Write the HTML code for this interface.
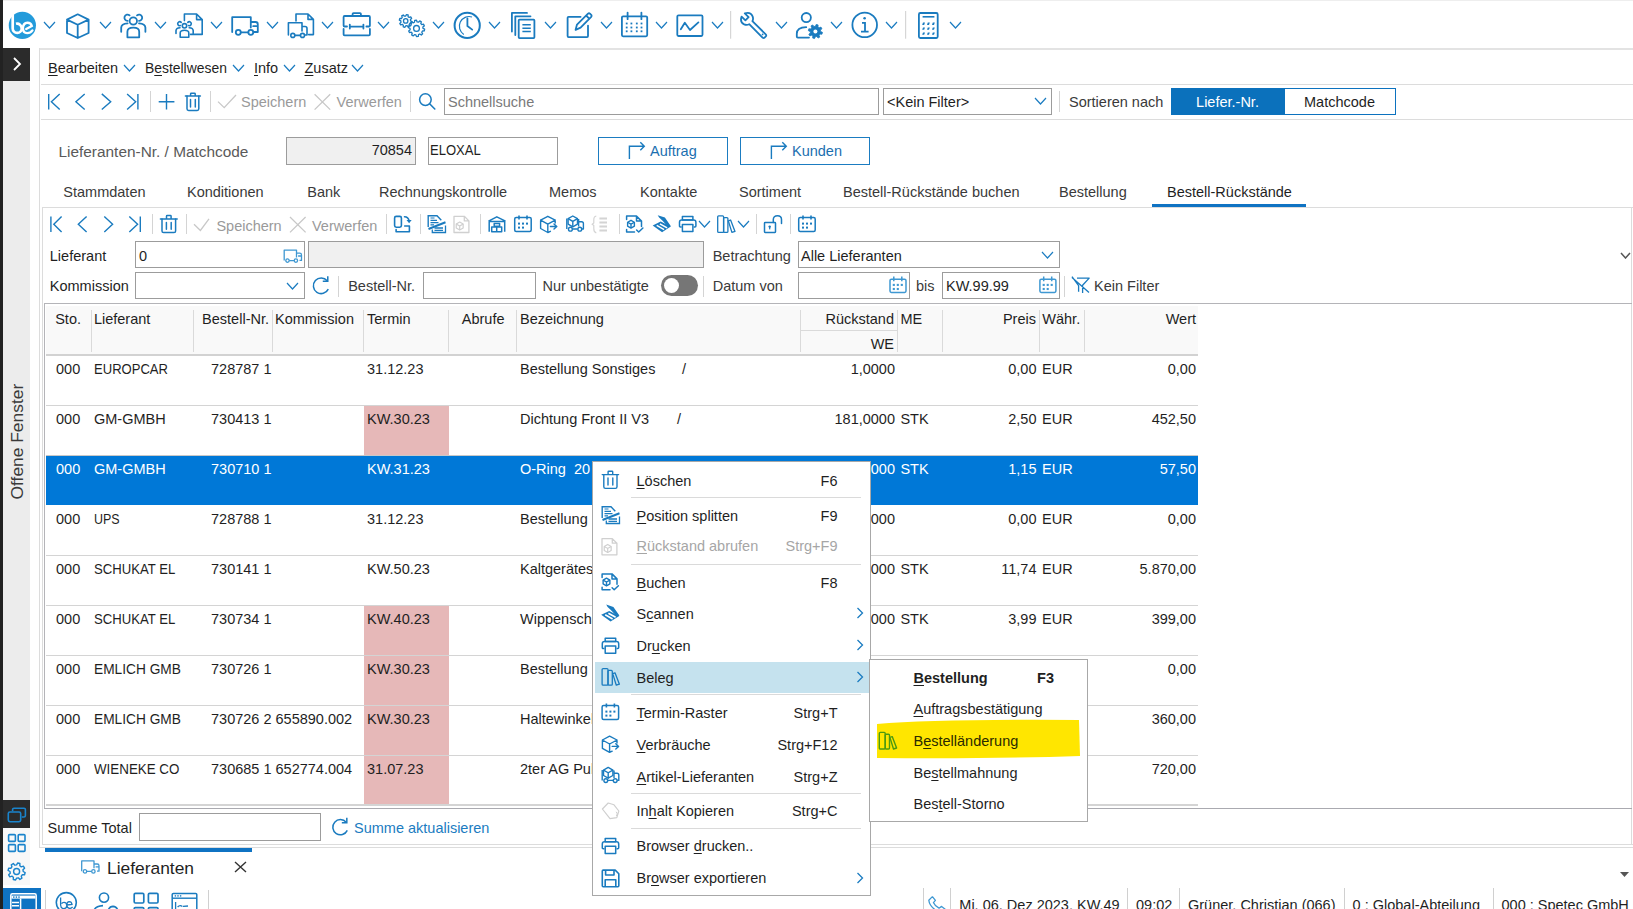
<!DOCTYPE html>
<html><head><meta charset="utf-8"><style>
html,body{margin:0;padding:0;}
body{width:1633px;height:909px;position:relative;overflow:hidden;background:#fff;font-family:"Liberation Sans",sans-serif;}
.a{position:absolute;}
.t{position:absolute;white-space:nowrap;line-height:20px;height:20px;}
u{text-decoration:underline;text-underline-offset:2px;text-decoration-thickness:1px;}
</style></head><body>
<div class="a" style="left:0px;top:0px;width:3px;height:909px;background:#222222;"></div>
<div class="a" style="left:3px;top:0px;width:1630px;height:1px;background:#eeeeee;"></div>
<div class="a" style="left:3px;top:48px;width:27px;height:33px;background:#2b2b2b;"></div>
<svg class="a" style="left:12px;top:57px;" width="10" height="14" viewBox="0 0 10 14"><polyline points="2,1 8,7 2,13" fill="none" stroke="#fff" stroke-width="1.8"/></svg>
<div class="a" style="left:3px;top:81px;width:27px;height:719px;background:#ececec;"></div>
<div class="t" style="left:-41px;top:431.5px;width:115px;font-size:17.4px;color:#3a3a3a;transform:rotate(-90deg);transform-origin:center;text-align:center;line-height:20px;">Offene Fenster</div>
<div class="a" style="left:3px;top:800px;width:27px;height:28px;background:#2b2b2b;"></div>
<div class="a" style="left:3px;top:828px;width:27px;height:57px;background:#f8f8f8;"></div>
<div class="a" style="left:3px;top:888px;width:38px;height:21px;background:#0f73c3;"></div>
<svg class="a" style="left:0;top:0" width="1633" height="909" viewBox="0 0 1633 909"><circle cx="22.35" cy="25.45" r="13.6" fill="#239bdb"/><path d="M12.7 14.2 L12.7 28.4 A4.5 4.5 0 0 0 21.7 28.4 A4.6 4.6 0 0 0 16 23.8" fill="none" stroke="#fff" stroke-width="2.7"/><path d="M26.2 29 L31.8 26 Q30.8 22.6 27.4 22.7 Q23.2 23 22.9 28 Q23 33 27.2 33.1 Q30.4 33.1 32.4 30.4" fill="none" stroke="#fff" stroke-width="2.4" stroke-linecap="round"/><path d="M77.7 14.3 L67 19.6 L67 33 L77.7 38 L88.6 33 L88.6 19.6 Z M67 19.6 L77.7 24.8 L88.6 19.6 M77.7 24.8 L77.7 38" fill="none" stroke="#1a7bbf" stroke-width="1.8" stroke-linecap="round" stroke-linejoin="round"/><circle cx="133.3" cy="21" r="3.7" fill="none" stroke="#1a7bbf" stroke-width="1.8" stroke-linecap="round" stroke-linejoin="round"/><path d="M127.4 37.3 L127.4 31.7 Q127.4 27.7 133.3 27.7 Q139.2 27.7 139.2 31.7 L139.2 37.3 Z" fill="none" stroke="#1a7bbf" stroke-width="1.8" stroke-linecap="round" stroke-linejoin="round"/><path d="M129.6 15.4 A3.1 3.1 0 1 0 127.6 20.8 M137 15.4 A3.1 3.1 0 1 1 139 20.8" fill="none" stroke="#1a7bbf" stroke-width="1.8" stroke-linecap="round" stroke-linejoin="round"/><path d="M121.2 31.8 L121.2 27.6 Q121.4 23.6 127.6 23.3 M145.4 31.8 L145.4 27.6 Q145.2 23.6 139 23.3" fill="none" stroke="#1a7bbf" stroke-width="1.8" stroke-linecap="round" stroke-linejoin="round"/><path d="M184.4 20.6 L184.4 14 L196.6 14 L202.2 19.6 L202.2 34.4 L190.5 34.4 M196.6 14 L196.6 19.6 L202.2 19.6" fill="none" stroke="#1a7bbf" stroke-width="1.6" stroke-linecap="round" stroke-linejoin="round"/><circle cx="184.5" cy="25.8" r="2.2" fill="none" stroke="#1a7bbf" stroke-width="1.6" stroke-linecap="round" stroke-linejoin="round"/><path d="M180.2 37.2 L180.2 33 Q180.2 30.3 184.5 30.3 Q188.8 30.3 188.8 33 L188.8 37.2 Z" fill="none" stroke="#1a7bbf" stroke-width="1.6" stroke-linecap="round" stroke-linejoin="round"/><path d="M181.2 22.4 A2 2 0 1 0 180.4 25.6 M187.8 22.4 A2 2 0 1 1 188.6 25.6 M176 33.4 L176 30.6 Q176.2 27.9 180 27.7 M193.2 33.4 L193.2 30.6 Q193 27.9 189.2 27.7" fill="none" stroke="#1a7bbf" stroke-width="1.6" stroke-linecap="round" stroke-linejoin="round"/><path d="M232.2 32 L232.2 17.2 L250.8 17.2 L250.8 27.5 M251 22 L255.6 22 Q257.8 22 257.8 24.4 L257.8 32 L253.4 32 M253.2 26.2 L257.4 26.2 M240.8 32.3 L248.3 32.3" fill="none" stroke="#1a7bbf" stroke-width="1.8" stroke-linecap="round" stroke-linejoin="round"/><circle cx="238.3" cy="32.3" r="2.5" fill="none" stroke="#1a7bbf" stroke-width="1.8" stroke-linecap="round" stroke-linejoin="round"/><circle cx="250.8" cy="32.3" r="2.5" fill="none" stroke="#1a7bbf" stroke-width="1.8" stroke-linecap="round" stroke-linejoin="round"/><path d="M296 21 L296 14 L308 14 L313.4 19.4 L313.4 34.6 L308.6 34.6 M308 14 L308 19.4 L313.4 19.4" fill="none" stroke="#1a7bbf" stroke-width="1.6" stroke-linecap="round" stroke-linejoin="round"/><path d="M288.4 35 L288.4 22.8 L302 22.8 L302 31 M302.2 26.5 L305 26.5 Q307 26.5 307 28.5 L307 35 L305 35 M294.8 35.4 L300.4 35.4" fill="none" stroke="#1a7bbf" stroke-width="1.6" stroke-linecap="round" stroke-linejoin="round"/><circle cx="292.8" cy="35.4" r="2" fill="none" stroke="#1a7bbf" stroke-width="1.6" stroke-linecap="round" stroke-linejoin="round"/><circle cx="302.5" cy="35.4" r="2" fill="none" stroke="#1a7bbf" stroke-width="1.6" stroke-linecap="round" stroke-linejoin="round"/><path d="M352.6 16 L352.6 13.9 Q352.6 13.1 353.5 13.1 L360 13.1 Q360.9 13.1 360.9 13.9 L360.9 16" fill="none" stroke="#1a7bbf" stroke-width="1.8" stroke-linecap="round" stroke-linejoin="round"/><path d="M347 26.5 L344.6 26.5 Q343.6 26.5 343.6 25.5 L343.6 17 Q343.6 16 344.6 16 L368.9 16 Q369.9 16 369.9 17 L369.9 25.5 Q369.9 26.5 368.9 26.5 L366.4 26.5 M343.6 29 L343.6 34.4 Q343.6 35.3 344.6 35.3 L368.9 35.3 Q369.9 35.3 369.9 34.4 L369.9 29 M349.8 26.6 L363.4 26.6 M349.8 24.6 L349.8 28.6 M363.4 24.6 L363.4 28.6" fill="none" stroke="#1a7bbf" stroke-width="1.8" stroke-linecap="round" stroke-linejoin="round"/><polygon points="410.60,20.90 412.06,21.65 411.61,23.35 409.98,23.29 409.16,24.36 409.66,25.93 408.15,26.81 407.03,25.62 405.70,25.80 404.95,27.26 403.25,26.81 403.31,25.18 402.24,24.36 400.67,24.86 399.79,23.35 400.98,22.23 400.80,20.90 399.34,20.15 399.79,18.45 401.42,18.51 402.24,17.44 401.74,15.87 403.25,14.99 404.37,16.18 405.70,16.00 406.45,14.54 408.15,14.99 408.09,16.62 409.16,17.44 410.73,16.94 411.61,18.45 410.42,19.57" fill="none" stroke="#1a7bbf" stroke-width="1.3" stroke-linejoin="round"/><circle cx="405.7" cy="20.9" r="2.2" fill="none" stroke="#1a7bbf" stroke-width="1.3"/><polygon points="423.00,28.40 424.66,29.17 424.30,30.93 422.47,30.98 421.76,32.22 422.65,33.82 421.32,35.03 419.81,33.99 418.51,34.58 418.29,36.40 416.50,36.60 415.89,34.87 414.49,34.58 413.24,35.93 411.68,35.03 412.20,33.28 411.24,32.22 409.44,32.57 408.70,30.93 410.16,29.82 410.00,28.40 408.34,27.63 408.70,25.87 410.53,25.82 411.24,24.58 410.35,22.98 411.68,21.77 413.19,22.81 414.49,22.22 414.71,20.40 416.50,20.20 417.11,21.93 418.51,22.22 419.76,20.87 421.32,21.77 420.80,23.52 421.76,24.58 423.56,24.23 424.30,25.87 422.84,26.98" fill="none" stroke="#1a7bbf" stroke-width="1.3" stroke-linejoin="round"/><circle cx="416.5" cy="28.4" r="2.9" fill="none" stroke="#1a7bbf" stroke-width="1.3"/><circle cx="467.2" cy="25.4" r="12.6" fill="none" stroke="#1a7bbf" stroke-width="2"/><path d="M472 17 A9.7 9.7 0 0 0 463.8 34.4" fill="none" stroke="#1a7bbf" stroke-width="1.2"/><path d="M467.4 18.3 L467.4 26 L472.2 29.6" fill="none" stroke="#1a7bbf" stroke-width="1.8" stroke-linecap="round" stroke-linejoin="round"/><path d="M511.9 31.6 L511.9 12.9 L527 12.9 M515.3 35 L515.3 16.3 L530.5 16.3" fill="none" stroke="#1a7bbf" stroke-width="1.8" stroke-linecap="round" stroke-linejoin="round"/><rect x="518.7" y="19.7" width="15.7" height="18.4" rx="0.8" fill="none" stroke="#1a7bbf" stroke-width="1.8" stroke-linecap="round" stroke-linejoin="round"/><path d="M522.4 24.8 L530.8 24.8 M522.4 28.2 L530.8 28.2 M522.4 31.6 L530.8 31.6" fill="none" stroke="#1a7bbf" stroke-width="1.5"/><path d="M580.6 16.8 L568.6 16.8 Q567.6 16.8 567.6 17.8 L567.6 36.1 Q567.6 37.1 568.6 37.1 L587 37.1 Q588 37.1 588 36.1 L588 25.6" fill="none" stroke="#1a7bbf" stroke-width="1.8" stroke-linecap="round" stroke-linejoin="round"/><path d="M575.6 29.8 L577 24.6 L588 13.7 Q589 12.9 590 13.7 L591.4 15.1 Q592 16 591.2 16.9 L580.6 27.7 Z M586.2 15.5 L589.4 18.8" fill="none" stroke="#1a7bbf" stroke-width="1.8" stroke-linecap="round" stroke-linejoin="round"/><rect x="621.9" y="16.4" width="25.3" height="19.9" rx="1.2" fill="none" stroke="#1a7bbf" stroke-width="1.8" stroke-linecap="round" stroke-linejoin="round"/><path d="M627.6 12.6 L627.6 19.2 M641.4 12.6 L641.4 19.2" fill="none" stroke="#1a7bbf" stroke-width="1.8" stroke-linecap="round" stroke-linejoin="round"/><rect x="625.8000000000001" y="22.6" width="1.8" height="1.8" fill="#1a7bbf"/><rect x="630.5" y="22.6" width="1.8" height="1.8" fill="#1a7bbf"/><rect x="635.9" y="22.6" width="1.8" height="1.8" fill="#1a7bbf"/><rect x="640.6" y="22.6" width="1.8" height="1.8" fill="#1a7bbf"/><rect x="625.8000000000001" y="26.6" width="1.8" height="1.8" fill="#1a7bbf"/><rect x="630.5" y="26.6" width="1.8" height="1.8" fill="#1a7bbf"/><rect x="635.9" y="26.6" width="1.8" height="1.8" fill="#1a7bbf"/><rect x="640.6" y="26.6" width="1.8" height="1.8" fill="#1a7bbf"/><rect x="625.8000000000001" y="30.400000000000002" width="1.8" height="1.8" fill="#1a7bbf"/><rect x="630.5" y="30.400000000000002" width="1.8" height="1.8" fill="#1a7bbf"/><rect x="635.9" y="30.400000000000002" width="1.8" height="1.8" fill="#1a7bbf"/><rect x="640.6" y="30.400000000000002" width="1.8" height="1.8" fill="#1a7bbf"/><rect x="677.3" y="15.4" width="25.2" height="20.6" rx="1.2" fill="none" stroke="#1a7bbf" stroke-width="1.8" stroke-linecap="round" stroke-linejoin="round"/><path d="M680.8 29.3 L684.8 22.8 L690 30 L698.4 22.4" fill="none" stroke="#1a7bbf" stroke-width="1.8" stroke-linecap="round" stroke-linejoin="round"/><rect x="730" y="11" width="1.2" height="27.7" fill="#d6d6d6"/><rect x="905" y="11" width="1.2" height="27.7" fill="#d6d6d6"/><path d="M741.6 16.6 L745.4 20.4 L748.6 17.2 L744.8 13.4 Q750.6 11.6 752.6 16.4 Q753.6 19 752.4 21.2 L766 34.6 Q766.6 35.6 765.8 36.4 L764.6 37.6 Q763.8 38.4 762.8 37.8 L749.2 24.2 Q746.8 25.4 744.2 24.4 Q739.6 22.4 741.6 16.6 Z" fill="none" stroke="#1a7bbf" stroke-width="1.8" stroke-linecap="round" stroke-linejoin="round"/><circle cx="762.6" cy="34.4" r="0.9" fill="#1a7bbf"/><circle cx="806.3" cy="17.6" r="4.6" fill="none" stroke="#1a7bbf" stroke-width="1.8" stroke-linecap="round" stroke-linejoin="round"/><path d="M809 37.6 L797.8 37.6 Q796.8 37.6 796.8 36.6 L796.8 33.8 Q796.8 27.4 806.2 27.2" fill="none" stroke="#1a7bbf" stroke-width="1.8" stroke-linecap="round" stroke-linejoin="round"/><polygon points="820.60,31.50 822.45,32.33 821.96,34.22 819.94,34.04 819.08,35.18 819.80,37.08 818.12,38.06 816.81,36.50 815.40,36.70 814.57,38.55 812.68,38.06 812.86,36.04 811.72,35.18 809.82,35.90 808.84,34.22 810.40,32.91 810.20,31.50 808.35,30.67 808.84,28.78 810.86,28.96 811.72,27.82 811.00,25.92 812.68,24.94 813.99,26.50 815.40,26.30 816.23,24.45 818.12,24.94 817.94,26.96 819.08,27.82 820.98,27.10 821.96,28.78 820.40,30.09" fill="#1a7bbf" stroke="#1a7bbf" stroke-width="0.8" stroke-linejoin="round"/><circle cx="815.4" cy="31.5" r="2.0" fill="#fff" stroke="none" stroke-width="0.8"/><circle cx="864.7" cy="24.9" r="12.3" fill="none" stroke="#1a7bbf" stroke-width="1.8"/><circle cx="864.6" cy="18.2" r="1.3" fill="#1a7bbf"/><path d="M862 22.8 L865 22.8 L865 31.6 M861 31.6 L868.6 31.6" fill="none" stroke="#1a7bbf" stroke-width="1.8"/><rect x="918.9" y="13" width="18.8" height="25" rx="1.4" fill="none" stroke="#1a7bbf" stroke-width="1.8" stroke-linecap="round" stroke-linejoin="round"/><path d="M922.6 16.8 L934.4 16.8" fill="none" stroke="#1a7bbf" stroke-width="1.6"/><path d="M922.2 25.0 L923.0 22.6 L925.0 22.6 L924.2 25.0 Z" fill="#1a7bbf"/><path d="M927.0 25.0 L927.8 22.6 L929.8 22.6 L929.0 25.0 Z" fill="#1a7bbf"/><path d="M932.0 25.0 L932.8 22.6 L934.8 22.6 L934.0 25.0 Z" fill="#1a7bbf"/><path d="M922.2 29.8 L923.0 27.400000000000002 L925.0 27.400000000000002 L924.2 29.8 Z" fill="#1a7bbf"/><path d="M927.0 29.8 L927.8 27.400000000000002 L929.8 27.400000000000002 L929.0 29.8 Z" fill="#1a7bbf"/><path d="M932.0 29.8 L932.8 27.400000000000002 L934.8 27.400000000000002 L934.0 29.8 Z" fill="#1a7bbf"/><path d="M922.2 34.800000000000004 L923.0 32.4 L925.0 32.4 L924.2 34.800000000000004 Z" fill="#1a7bbf"/><path d="M927.0 34.800000000000004 L927.8 32.4 L929.8 32.4 L929.0 34.800000000000004 Z" fill="#1a7bbf"/><path d="M932.0 34.800000000000004 L932.8 32.4 L934.8 32.4 L934.0 34.800000000000004 Z" fill="#1a7bbf"/></svg>
<svg class="a" style="left:43.0px;top:21.0px;" width="13" height="8" viewBox="0 0 13 8"><polyline points="1,1 6.5,7 12,1" fill="none" stroke="#1b7cc1" stroke-width="1.2"/></svg>
<svg class="a" style="left:98.5px;top:21.0px;" width="13" height="8" viewBox="0 0 13 8"><polyline points="1,1 6.5,7 12,1" fill="none" stroke="#1b7cc1" stroke-width="1.2"/></svg>
<svg class="a" style="left:154.3px;top:21.0px;" width="13" height="8" viewBox="0 0 13 8"><polyline points="1,1 6.5,7 12,1" fill="none" stroke="#1b7cc1" stroke-width="1.2"/></svg>
<svg class="a" style="left:209.8px;top:21.0px;" width="13" height="8" viewBox="0 0 13 8"><polyline points="1,1 6.5,7 12,1" fill="none" stroke="#1b7cc1" stroke-width="1.2"/></svg>
<svg class="a" style="left:265.5px;top:21.0px;" width="13" height="8" viewBox="0 0 13 8"><polyline points="1,1 6.5,7 12,1" fill="none" stroke="#1b7cc1" stroke-width="1.2"/></svg>
<svg class="a" style="left:321.1px;top:21.0px;" width="13" height="8" viewBox="0 0 13 8"><polyline points="1,1 6.5,7 12,1" fill="none" stroke="#1b7cc1" stroke-width="1.2"/></svg>
<svg class="a" style="left:376.7px;top:21.0px;" width="13" height="8" viewBox="0 0 13 8"><polyline points="1,1 6.5,7 12,1" fill="none" stroke="#1b7cc1" stroke-width="1.2"/></svg>
<svg class="a" style="left:432.3px;top:21.0px;" width="13" height="8" viewBox="0 0 13 8"><polyline points="1,1 6.5,7 12,1" fill="none" stroke="#1b7cc1" stroke-width="1.2"/></svg>
<svg class="a" style="left:487.9px;top:21.0px;" width="13" height="8" viewBox="0 0 13 8"><polyline points="1,1 6.5,7 12,1" fill="none" stroke="#1b7cc1" stroke-width="1.2"/></svg>
<svg class="a" style="left:544.0px;top:21.0px;" width="13" height="8" viewBox="0 0 13 8"><polyline points="1,1 6.5,7 12,1" fill="none" stroke="#1b7cc1" stroke-width="1.2"/></svg>
<svg class="a" style="left:599.5px;top:21.0px;" width="13" height="8" viewBox="0 0 13 8"><polyline points="1,1 6.5,7 12,1" fill="none" stroke="#1b7cc1" stroke-width="1.2"/></svg>
<svg class="a" style="left:655.2px;top:21.0px;" width="13" height="8" viewBox="0 0 13 8"><polyline points="1,1 6.5,7 12,1" fill="none" stroke="#1b7cc1" stroke-width="1.2"/></svg>
<svg class="a" style="left:710.5px;top:21.0px;" width="13" height="8" viewBox="0 0 13 8"><polyline points="1,1 6.5,7 12,1" fill="none" stroke="#1b7cc1" stroke-width="1.2"/></svg>
<svg class="a" style="left:774.5px;top:21.0px;" width="13" height="8" viewBox="0 0 13 8"><polyline points="1,1 6.5,7 12,1" fill="none" stroke="#1b7cc1" stroke-width="1.2"/></svg>
<svg class="a" style="left:829.9px;top:21.0px;" width="13" height="8" viewBox="0 0 13 8"><polyline points="1,1 6.5,7 12,1" fill="none" stroke="#1b7cc1" stroke-width="1.2"/></svg>
<svg class="a" style="left:885.3px;top:21.0px;" width="13" height="8" viewBox="0 0 13 8"><polyline points="1,1 6.5,7 12,1" fill="none" stroke="#1b7cc1" stroke-width="1.2"/></svg>
<svg class="a" style="left:949.0px;top:21.0px;" width="13" height="8" viewBox="0 0 13 8"><polyline points="1,1 6.5,7 12,1" fill="none" stroke="#1b7cc1" stroke-width="1.2"/></svg>
<svg class="a" style="left:0;top:0" width="1633" height="909" viewBox="0 0 1633 909"><path d="M48.7 93.9 L48.7 109.5 M59.7 93.9 L51.4 101.7 L59.7 109.5" fill="none" stroke="#1a7bbf" stroke-width="1.4" stroke-linecap="butt" stroke-linejoin="miter"/><path d="M84.7 93.9 L75.9 101.7 L84.7 109.5 M101.8 93.9 L110.7 101.7 L101.8 109.5" fill="none" stroke="#1a7bbf" stroke-width="1.4" stroke-linecap="butt" stroke-linejoin="miter"/><path d="M137.9 93.9 L137.9 109.5 M127.1 93.9 L135.7 101.7 L127.1 109.5" fill="none" stroke="#1a7bbf" stroke-width="1.4" stroke-linecap="butt" stroke-linejoin="miter"/><path d="M158.7 101.7 L174.4 101.7 M166.5 94 L166.5 109.5" fill="none" stroke="#1a7bbf" stroke-width="1.4"/><path d="M185.4 96 L200.4 96 M190.6 96 L190.6 93.8 Q190.6 93.2 191.3 93.2 L194.5 93.2 Q195.20000000000002 93.2 195.20000000000002 93.8 L195.20000000000002 96" fill="none" stroke="#1a7bbf" stroke-width="1.5" stroke-linecap="round" stroke-linejoin="round"/><path d="M187.0 96 L187.0 108.80000000000001 Q187.0 110.4 188.6 110.4 L197.20000000000002 110.4 Q198.8 110.4 198.8 108.80000000000001 L198.8 96" fill="none" stroke="#1a7bbf" stroke-width="1.5" stroke-linecap="round" stroke-linejoin="round"/><path d="M190.5 99.4 L190.5 107.0 M195.3 99.4 L195.3 107.0" fill="none" stroke="#1a7bbf" stroke-width="1.5" stroke-linecap="round" stroke-linejoin="round"/><path d="M218 101.6 L224.2 107.6 L236 95" fill="none" stroke="#c8c8c8" stroke-width="1.3"/><path d="M314.6 94.2 L330.2 109.6 M330.2 94.2 L314.6 109.6" fill="none" stroke="#c8c8c8" stroke-width="1.3"/><circle cx="425.4" cy="99.6" r="5.8" fill="none" stroke="#1a7bbf" stroke-width="1.5"/><path d="M429.6 103.8 L434.8 109" stroke="#1a7bbf" stroke-width="1.6" stroke-linecap="round"/><circle cx="864.8" cy="100" r="6" fill="none" stroke="#1a7bbf" stroke-width="1.5"/><path d="M869.2 104.4 L874.6 109.6" stroke="#1a7bbf" stroke-width="1.6" stroke-linecap="round"/><path d="M50.9 216.39999999999998 L50.9 232.0 M61.6 216.39999999999998 L53.8 224.2 L61.6 232.0" fill="none" stroke="#1a7bbf" stroke-width="1.4" stroke-linecap="butt" stroke-linejoin="miter"/><path d="M86.6 216.39999999999998 L78.3 224.2 L86.6 232.0 M104.3 216.39999999999998 L112.6 224.2 L104.3 232.0" fill="none" stroke="#1a7bbf" stroke-width="1.4" stroke-linecap="butt" stroke-linejoin="miter"/><path d="M140.3 216.39999999999998 L140.3 232.0 M129.3 216.39999999999998 L137.6 224.2 L129.3 232.0" fill="none" stroke="#1a7bbf" stroke-width="1.4" stroke-linecap="butt" stroke-linejoin="miter"/><path d="M160.4 219 L177.2 219 M166.5 219 L166.5 216.2 Q166.5 215.6 167.20000000000002 215.6 L170.4 215.6 Q171.10000000000002 215.6 171.10000000000002 216.2 L171.10000000000002 219" fill="none" stroke="#1a7bbf" stroke-width="1.5" stroke-linecap="round" stroke-linejoin="round"/><path d="M162.0 219 L162.0 231.0 Q162.0 232.6 163.6 232.6 L174.0 232.6 Q175.6 232.6 175.6 231.0 L175.6 219" fill="none" stroke="#1a7bbf" stroke-width="1.5" stroke-linecap="round" stroke-linejoin="round"/><path d="M166.4 222.4 L166.4 229.2 M171.20000000000002 222.4 L171.20000000000002 229.2" fill="none" stroke="#1a7bbf" stroke-width="1.5" stroke-linecap="round" stroke-linejoin="round"/><path d="M194 224.2 L200.4 230.4 L209 218.8" fill="none" stroke="#c8c8c8" stroke-width="1.3"/><path d="M290 217 L305.6 232.4 M305.6 217 L290 232.4" fill="none" stroke="#c8c8c8" stroke-width="1.3"/></svg>
<div class="a" style="left:40px;top:48px;width:1593px;height:2px;background:#e3e3e3;"></div>
<div class="a" style="left:39px;top:48px;width:1px;height:800px;background:#dcdcdc;"></div>
<div class="a" style="left:41px;top:84px;width:1592px;height:1px;background:#dcdcdc;"></div>
<div class="a" style="left:41px;top:119px;width:1592px;height:1px;background:#dcdcdc;"></div>
<div class="a" style="left:40px;top:847px;width:1593px;height:1px;background:#dcdcdc;"></div>
<div class="t" style="top:57.98px;font-size:14.5px;left:48px;color:#1f1f1f;"><u>B</u>earbeiten</div>
<svg class="a" style="left:122.5px;top:64.0px;" width="13" height="8" viewBox="0 0 13 8"><polyline points="1,1 6.5,7 12,1" fill="none" stroke="#1b7cc1" stroke-width="1.2"/></svg>
<div class="t" style="top:58.18px;font-size:13.9px;left:145px;color:#1f1f1f;">B<u>e</u>stellwesen</div>
<svg class="a" style="left:231.5px;top:64.0px;" width="13" height="8" viewBox="0 0 13 8"><polyline points="1,1 6.5,7 12,1" fill="none" stroke="#1b7cc1" stroke-width="1.2"/></svg>
<div class="t" style="top:57.98px;font-size:14.5px;left:254px;color:#1f1f1f;"><u>I</u>nfo</div>
<svg class="a" style="left:282.5px;top:64.0px;" width="13" height="8" viewBox="0 0 13 8"><polyline points="1,1 6.5,7 12,1" fill="none" stroke="#1b7cc1" stroke-width="1.2"/></svg>
<div class="t" style="top:57.98px;font-size:14.5px;left:304.5px;color:#1f1f1f;"><u>Z</u>usatz</div>
<svg class="a" style="left:351.0px;top:64.0px;" width="13" height="8" viewBox="0 0 13 8"><polyline points="1,1 6.5,7 12,1" fill="none" stroke="#1b7cc1" stroke-width="1.2"/></svg>
<div class="t" style="top:91.98px;font-size:14.5px;left:241px;color:#9a9a9a;">Speichern</div>
<div class="t" style="top:91.98px;font-size:14.5px;left:336.6px;color:#9a9a9a;">Verwerfen</div>
<div class="a" style="left:150px;top:91px;width:1px;height:21px;background:#d4d4d4;"></div>
<div class="a" style="left:210px;top:91px;width:1px;height:21px;background:#d4d4d4;"></div>
<div class="a" style="left:410px;top:91px;width:1px;height:21px;background:#d4d4d4;"></div>
<div class="a" style="left:444px;top:88px;width:435px;height:27px;background:#fff;box-sizing:border-box;border:1px solid #9c9c9c;"></div>
<div class="t" style="top:91.98px;font-size:14.5px;left:448px;color:#7a7a7a;">Schnellsuche</div>
<div class="a" style="left:883px;top:88px;width:169px;height:27px;background:#fff;box-sizing:border-box;border:1px solid #9c9c9c;"></div>
<div class="t" style="top:91.98px;font-size:14.5px;left:887px;color:#1f1f1f;">&lt;Kein Filter&gt;</div>
<svg class="a" style="left:1033.5px;top:97.0px;" width="13" height="8" viewBox="0 0 13 8"><polyline points="1,1 6.5,7 12,1" fill="none" stroke="#1b7cc1" stroke-width="1.2"/></svg>
<div class="a" style="left:1059px;top:91px;width:1px;height:21px;background:#d4d4d4;"></div>
<div class="t" style="top:91.98px;font-size:14.5px;left:1069px;color:#3a3a3a;">Sortieren nach</div>
<div class="a" style="left:1171px;top:88px;width:225px;height:27px;background:#fff;box-sizing:border-box;border:1px solid #0c72bf;"></div>
<div class="a" style="left:1171px;top:88px;width:114px;height:27px;background:#0b71bc;"></div>
<div class="t" style="top:91.98px;font-size:14.5px;left:1227.5px;color:#fff;transform:translateX(-50%);">Liefer.-Nr.</div>
<div class="t" style="top:91.98px;font-size:14.5px;left:1339.5px;color:#1f1f1f;transform:translateX(-50%);">Matchcode</div>
<div class="t" style="top:141.66px;font-size:15.4px;left:58.5px;color:#5a5a5a;">Lieferanten-Nr. / Matchcode</div>
<div class="a" style="left:286px;top:137px;width:130px;height:28px;background:#f0f0f0;box-sizing:border-box;border:1px solid #9c9c9c;"></div>
<div class="t" style="top:139.98px;font-size:14.5px;right:1221px;color:#1f1f1f;">70854</div>
<div class="a" style="left:428px;top:137px;width:130px;height:28px;background:#fff;box-sizing:border-box;border:1px solid #9c9c9c;"></div>
<div class="t" style="top:139.98px;font-size:14.5px;transform:scaleX(0.9);transform-origin:left center;left:430px;color:#1f1f1f;">ELOXAL</div>
<div class="a" style="left:598px;top:137px;width:130px;height:28px;background:#fff;box-sizing:border-box;border:1.5px solid #1b7cc1;"></div>
<div class="t" style="top:140.98px;font-size:14.5px;left:650px;color:#1b6fb0;">Auftrag</div>
<div class="a" style="left:740px;top:137px;width:130px;height:28px;background:#fff;box-sizing:border-box;border:1.5px solid #1b7cc1;"></div>
<div class="t" style="top:140.98px;font-size:14.5px;left:792px;color:#1b6fb0;">Kunden</div>
<svg class="a" style="left:0;top:0" width="1633" height="909" viewBox="0 0 1633 909"><path d="M629.4 158.9 L629.4 146.2 L644.2 146.2 M640.3 142.2 L644.3 146.2 L640.3 150.2" fill="none" stroke="#1a7bbf" stroke-width="1.4"/></svg>
<svg class="a" style="left:0;top:0" width="1633" height="909" viewBox="0 0 1633 909"><path d="M771.4 158.9 L771.4 146.2 L786.2 146.2 M782.3 142.2 L786.3 146.2 L782.3 150.2" fill="none" stroke="#1a7bbf" stroke-width="1.4"/></svg>
<div class="t" style="top:181.98px;font-size:14.5px;left:63.3px;color:#3a3a3a;">Stammdaten</div>
<div class="t" style="top:181.98px;font-size:14.5px;left:187px;color:#3a3a3a;">Konditionen</div>
<div class="t" style="top:181.98px;font-size:14.5px;left:307.3px;color:#3a3a3a;">Bank</div>
<div class="t" style="top:181.98px;font-size:14.5px;left:379px;color:#3a3a3a;">Rechnungskontrolle</div>
<div class="t" style="top:181.98px;font-size:14.5px;left:549px;color:#3a3a3a;">Memos</div>
<div class="t" style="top:181.98px;font-size:14.5px;left:640px;color:#3a3a3a;">Kontakte</div>
<div class="t" style="top:181.98px;font-size:14.5px;left:739px;color:#3a3a3a;">Sortiment</div>
<div class="t" style="top:181.98px;font-size:14.5px;left:843px;color:#3a3a3a;">Bestell-Rückstände buchen</div>
<div class="t" style="top:181.98px;font-size:14.5px;left:1059px;color:#3a3a3a;">Bestellung</div>
<div class="t" style="top:181.98px;font-size:14.5px;left:1167px;color:#1f1f1f;">Bestell-Rückstände</div>
<div class="a" style="left:1152px;top:204px;width:154px;height:3px;background:#0f73c3;"></div>
<div class="a" style="left:42px;top:207px;width:1591px;height:1px;background:#dcdcdc;"></div>
<div class="a" style="left:42px;top:207px;width:1px;height:638px;background:#dcdcdc;"></div>
<div class="a" style="left:1631px;top:207px;width:1px;height:638px;background:#dcdcdc;"></div>
<div class="a" style="left:42px;top:844px;width:1591px;height:1px;background:#dcdcdc;"></div>
<div class="t" style="top:215.98px;font-size:14.5px;left:216.4px;color:#9a9a9a;">Speichern</div>
<div class="t" style="top:215.98px;font-size:14.5px;left:312px;color:#9a9a9a;">Verwerfen</div>
<div class="a" style="left:152px;top:214px;width:1px;height:20px;background:#d4d4d4;"></div>
<div class="a" style="left:186px;top:214px;width:1px;height:20px;background:#d4d4d4;"></div>
<div class="a" style="left:386px;top:214px;width:1px;height:20px;background:#d4d4d4;"></div>
<div class="a" style="left:420px;top:214px;width:1px;height:20px;background:#d4d4d4;"></div>
<div class="a" style="left:480px;top:214px;width:1px;height:20px;background:#d4d4d4;"></div>
<div class="a" style="left:619px;top:214px;width:1px;height:20px;background:#d4d4d4;"></div>
<div class="a" style="left:756px;top:214px;width:1px;height:20px;background:#d4d4d4;"></div>
<div class="a" style="left:790px;top:214px;width:1px;height:20px;background:#d4d4d4;"></div>
<div class="t" style="top:245.98px;font-size:14.5px;left:49.8px;color:#1f1f1f;">Lieferant</div>
<div class="a" style="left:135px;top:241px;width:170px;height:27px;background:#fff;box-sizing:border-box;border:1px solid #9c9c9c;"></div>
<div class="t" style="top:245.98px;font-size:14.5px;left:139px;color:#1f1f1f;">0</div>
<div class="a" style="left:308px;top:241px;width:396px;height:27px;background:#f0f0f0;box-sizing:border-box;border:1px solid #9c9c9c;"></div>
<div class="t" style="top:245.98px;font-size:14.5px;left:712.7px;color:#3a3a3a;">Betrachtung</div>
<div class="a" style="left:798px;top:241px;width:262px;height:27px;background:#fff;box-sizing:border-box;border:1px solid #9c9c9c;"></div>
<div class="t" style="top:245.98px;font-size:14.5px;left:801px;color:#1f1f1f;">Alle Lieferanten</div>
<svg class="a" style="left:1040.5px;top:251.0px;" width="13" height="8" viewBox="0 0 13 8"><polyline points="1,1 6.5,7 12,1" fill="none" stroke="#1b7cc1" stroke-width="1.2"/></svg>
<svg class="a" style="left:1619.5px;top:251.5px;" width="11" height="7" viewBox="0 0 11 7"><polyline points="1,1 5.5,6 10,1" fill="none" stroke="#555" stroke-width="1.5"/></svg>
<div class="t" style="top:275.98px;font-size:14.5px;left:49.8px;color:#1f1f1f;">Kommission</div>
<div class="a" style="left:135px;top:272px;width:170px;height:27px;background:#fff;box-sizing:border-box;border:1px solid #9c9c9c;"></div>
<svg class="a" style="left:285.5px;top:282.0px;" width="13" height="8" viewBox="0 0 13 8"><polyline points="1,1 6.5,7 12,1" fill="none" stroke="#1b7cc1" stroke-width="1.2"/></svg>
<div class="a" style="left:338px;top:276px;width:1px;height:21px;background:#d4d4d4;"></div>
<div class="t" style="top:275.98px;font-size:14.5px;left:348.2px;color:#3a3a3a;">Bestell-Nr.</div>
<div class="a" style="left:423px;top:272px;width:113px;height:27px;background:#fff;box-sizing:border-box;border:1px solid #9c9c9c;"></div>
<div class="t" style="top:275.98px;font-size:14.5px;left:542.5px;color:#3a3a3a;">Nur unbestätigte</div>
<div class="a" style="left:661px;top:275px;width:37px;height:21px;background:#767676;border-radius:11px;"></div>
<div class="a" style="left:664px;top:278px;width:15px;height:15px;background:#fff;border-radius:50%;"></div>
<div class="a" style="left:703px;top:276px;width:1px;height:21px;background:#d4d4d4;"></div>
<div class="t" style="top:275.98px;font-size:14.5px;left:712.7px;color:#3a3a3a;">Datum von</div>
<div class="a" style="left:798px;top:272px;width:112px;height:27px;background:#fff;box-sizing:border-box;border:1px solid #9c9c9c;"></div>
<div class="t" style="top:275.98px;font-size:14.5px;left:916px;color:#3a3a3a;">bis</div>
<div class="a" style="left:942px;top:272px;width:118px;height:27px;background:#fff;box-sizing:border-box;border:1px solid #9c9c9c;"></div>
<div class="t" style="top:275.98px;font-size:14.5px;left:946px;color:#1f1f1f;">KW.99.99</div>
<div class="a" style="left:1064px;top:276px;width:1px;height:21px;background:#d4d4d4;"></div>
<div class="t" style="top:275.98px;font-size:14.5px;left:1094px;color:#3a3a3a;">Kein Filter</div>
<svg class="a" style="left:0;top:0" width="1633" height="909" viewBox="0 0 1633 909"><g transform="translate(393.7,215.5)"><rect x="0.9" y="0.9" width="6.8" height="10.8" rx="1.6" fill="none" stroke="#1a7bbf" stroke-width="1.6" stroke-linecap="round" stroke-linejoin="round"/><path d="M2.4 14 L2.4 16.2 L15.7 16.2 L15.7 10.5 L11 10.5" fill="none" stroke="#1a7bbf" stroke-width="1.6" stroke-linecap="round" stroke-linejoin="round"/><path d="M10.8 1.2 Q14.6 1.3 15.4 5.2" fill="none" stroke="#1a7bbf" stroke-width="1.6" stroke-linecap="round" stroke-linejoin="round"/><polygon points="12.8,4.6 18,4.6 15.4,7.8" fill="#1a7bbf"/></g><g transform="translate(427.5,215.2)"><path d="M0.7 11.8 L0.7 0.6 L9.5 0.6 L13.8 5.1" fill="none" stroke="#1a7bbf" stroke-width="1.4"/><path d="M3 2.8 L7 2.8 M3 5.1 L9.5 5.1 M3 7.4 L11 7.4 M3 9.6 L6.5 9.6" fill="none" stroke="#1a7bbf" stroke-width="1.2"/><path d="M1 13.8 L18 7.1" fill="none" stroke="#1a7bbf" stroke-width="2"/><path d="M4.8 14.3 L4.8 17.3 L18 17.3 L18 10.3 M7 12.8 L15.5 12.8 M7 15.1 L15.5 15.1" fill="none" stroke="#1a7bbf" stroke-width="1.3"/></g><g transform="translate(452.5,215.5)"><path d="M1.5 17 L1.5 0.8 L11.8 0.8 L16.4 5.4 L16.4 17 Z M11.8 0.8 L11.8 5.4 L16.4 5.4" fill="none" stroke="#d0d0d0" stroke-width="1.3" stroke-linejoin="round"/><polygon points="7.20,6.60 10.66,8.60 10.66,12.60 7.20,14.60 3.74,12.60 3.74,8.60" fill="none" stroke="#d0d0d0" stroke-width="1.2" stroke-linejoin="round"/><path d="M3.74 8.60 L7.2 10.6 L10.66 8.60 M7.2 10.6 L7.2 14.6" fill="none" stroke="#d0d0d0" stroke-width="1.2"/></g><g transform="translate(487.8,215.2)"><path d="M0.7 6 L9 1.6 L17.7 6 M0.7 6.2 L17.7 6.2 M1.4 6.2 L1.4 16.5 M16.9 6.2 L16.9 16.5" fill="none" stroke="#1a7bbf" stroke-width="1.5" stroke-linejoin="round"/><rect x="6.4" y="8.3" width="5.4" height="2.7" fill="none" stroke="#1a7bbf" stroke-width="1.5" stroke-linejoin="round"/><rect x="3.9" y="11.8" width="10" height="4.7" fill="none" stroke="#1a7bbf" stroke-width="1.5" stroke-linejoin="round"/><path d="M8.9 11.8 L8.9 16.5" fill="none" stroke="#1a7bbf" stroke-width="1.5" stroke-linejoin="round"/></g><g transform="translate(514,215)"><rect x="0.7" y="2.6" width="16.5" height="13.9" rx="1.5" fill="none" stroke="#1a7bbf" stroke-width="1.5" stroke-linejoin="round"/><path d="M5 0.4 L5 4.6 M13 0.4 L13 4.6" fill="none" stroke="#1a7bbf" stroke-width="1.6"/><rect x="4" y="7.6" width="2" height="2" fill="#1a7bbf"/><rect x="8" y="7.6" width="2" height="2" fill="#1a7bbf"/><rect x="12" y="7.6" width="2" height="2" fill="#1a7bbf"/><rect x="4" y="11.6" width="2" height="2" fill="#1a7bbf"/><rect x="8" y="11.6" width="2" height="2" fill="#1a7bbf"/></g><g transform="translate(539.8,215.5)"><path d="M10.6 15.8 L8 17 L0.8 13 L0.8 4.6 L8 0.8 L15.4 4.6 L15.4 7.6 M0.8 4.6 L8 8.6 L15.4 4.6 M8 8.6 L8 17" fill="none" stroke="#1a7bbf" stroke-width="1.4" stroke-linejoin="round" stroke-linecap="round"/><path d="M10.6 11 L16.6 11 M14.2 8.4 L17 11 L14.2 13.6" fill="none" stroke="#1a7bbf" stroke-width="1.4" stroke-linejoin="round" stroke-linecap="round"/></g><g transform="translate(566,215)"><path d="M0.8 14 L0.8 3.5 M12.6 4 L12.6 11.5 M12.8 6.8 L15.6 6.8 Q17.4 6.8 17.4 8.6 L17.4 14 L15.8 14 M6.3 14 L11.7 14" fill="none" stroke="#1a7bbf" stroke-width="1.4" stroke-linejoin="round"/><polygon points="6.80,1.00 11.48,3.70 11.48,9.10 6.80,11.80 2.12,9.10 2.12,3.70" fill="none" stroke="#1a7bbf" stroke-width="1.4" stroke-linejoin="round"/><path d="M2.12 3.70 L6.8 6.4 L11.48 3.70 M6.8 6.4 L6.8 11.8" fill="none" stroke="#1a7bbf" stroke-width="1.4"/><circle cx="4.4" cy="14.2" r="1.9" fill="none" stroke="#1a7bbf" stroke-width="1.4" stroke-linejoin="round"/><circle cx="13.8" cy="14.2" r="1.9" fill="none" stroke="#1a7bbf" stroke-width="1.4" stroke-linejoin="round"/></g><g transform="translate(591,215.5)"><path d="M5.3 0.5 Q2.6 1 2.8 4.8 L2.8 7.4 L1.2 8.7 L2.8 10 L2.8 13 Q2.6 16.6 5.3 17.3" fill="none" stroke="#d4d4d4" stroke-width="1.2"/><path d="M8.4 3 L16 3 M8.4 7 L16 7 M8.4 11 L16 11 M8.4 15 L16 15" fill="none" stroke="#d4d4d4" stroke-width="1.8"/></g><g transform="translate(625.7,215)"><path d="M0.9 4.6 L0.9 1.1 L10.8 1.1 L15.8 6.1 L15.8 11.4 M10.8 1.1 L10.8 6.1 L15.8 6.1 M0.9 14.4 L0.9 17 L8.8 17 M10.9 15 L13 17 L17.2 13" fill="none" stroke="#1a7bbf" stroke-width="1.5" stroke-linejoin="round" stroke-linecap="round"/><polygon points="5.30,5.30 8.68,7.25 8.68,11.15 5.30,13.10 1.92,11.15 1.92,7.25" fill="none" stroke="#1a7bbf" stroke-width="1.4" stroke-linejoin="round"/><path d="M1.92 7.25 L5.3 9.2 L8.68 7.25 M5.3 9.2 L5.3 13.1" fill="none" stroke="#1a7bbf" stroke-width="1.4"/></g><g transform="translate(652.5,215)"><polygon points="5.2,0.2 12.4,2.6 18.4,11.2 16.2,12.4 9.8,5.6 6.6,2.6" fill="#1a7bbf"/><polygon points="0.2,10.4 8.2,6.6 18.2,11.6 9.6,17.2" fill="#1a7bbf"/><path d="M4.2 10.4 L11.6 14.6 M7.4 8.9 L14.6 12.9" stroke="#fff" stroke-width="1.6"/></g><g transform="translate(678.7,215)"><rect x="3.7" y="1.6" width="10.5" height="3.4" fill="none" stroke="#1a7bbf" stroke-width="1.5" stroke-linejoin="round"/><path d="M3 12 L1.8 12 Q0.8 12 0.8 11 L0.8 7.2 Q0.8 5 3 5 L15 5 Q17.2 5 17.2 7.2 L17.2 11 Q17.2 12 16.2 12 L15 12" fill="none" stroke="#1a7bbf" stroke-width="1.5" stroke-linejoin="round"/><rect x="3.7" y="9.4" width="10.5" height="7.2" fill="none" stroke="#1a7bbf" stroke-width="1.5" stroke-linejoin="round"/></g><g transform="translate(717,215)"><rect x="0.7" y="0.8" width="5.9" height="16.6" rx="1" fill="none" stroke="#1a7bbf" stroke-width="1.3" stroke-linejoin="round"/><rect x="6.6" y="2.6" width="4.3" height="14.8" rx="1" fill="none" stroke="#1a7bbf" stroke-width="1.3" stroke-linejoin="round"/><polygon points="11.3,5.8 13.6,5 18,16.4 14.9,17.4" fill="none" stroke="#1a7bbf" stroke-width="1.3" stroke-linejoin="round"/></g><g transform="translate(763.7,215)"><rect x="0.8" y="7.6" width="11" height="9.8" rx="0.6" fill="none" stroke="#1a7bbf" stroke-width="1.5" stroke-linejoin="round" stroke-linecap="round"/><path d="M9.6 7.6 L9.6 4.6 Q9.6 0.8 13.8 0.8 Q17.8 0.8 17.8 4.6 L17.8 8.4" fill="none" stroke="#1a7bbf" stroke-width="1.5" stroke-linejoin="round" stroke-linecap="round"/><circle cx="6" cy="11.6" r="1.2" fill="#1a7bbf"/><rect x="5.4" y="11.8" width="1.2" height="2.6" fill="#1a7bbf"/></g><g transform="translate(798,215)"><rect x="0.7" y="2.6" width="16.5" height="13.9" rx="1.5" fill="none" stroke="#1a7bbf" stroke-width="1.5" stroke-linejoin="round"/><path d="M5 0.4 L5 4.6 M13 0.4 L13 4.6" fill="none" stroke="#1a7bbf" stroke-width="1.6"/><rect x="4" y="7.6" width="2" height="2" fill="#1a7bbf"/><rect x="8" y="7.6" width="2" height="2" fill="#1a7bbf"/><rect x="12" y="7.6" width="2" height="2" fill="#1a7bbf"/><rect x="4" y="11.6" width="2" height="2" fill="#1a7bbf"/><rect x="8" y="11.6" width="2" height="2" fill="#1a7bbf"/></g><g transform="translate(283.5,249.4)"><path d="M0.7 11 L0.7 0.7 L13 0.7 L13 8 M13.2 3.8 L16.2 3.8 Q18 3.8 18 5.6 L18 11 L16 11 M14.6 6.6 L17.6 6.6 M5.6 11.2 L10.6 11.2" fill="none" stroke="#3f98d2" stroke-width="1.3" stroke-linejoin="round"/><circle cx="4" cy="11.2" r="1.7" fill="none" stroke="#3f98d2" stroke-width="1.3" stroke-linejoin="round"/><circle cx="12.4" cy="11.2" r="1.7" fill="none" stroke="#3f98d2" stroke-width="1.3" stroke-linejoin="round"/></g><path d="M327.18 280.79 A7.8 7.8 0 1 0 328.27 289.10" fill="none" stroke="#1a7bbf" stroke-width="1.5"/><path d="M327.78 276.19 L327.78 281.19 L322.78 281.19" fill="none" stroke="#1a7bbf" stroke-width="1.5"/><g transform="translate(889.3,276.2)"><rect x="0.7" y="3" width="16" height="13.2" rx="1.4" fill="none" stroke="#3f98d2" stroke-width="1.5"/><path d="M4.5 0.4 L4.5 5 M12.5 0.4 L12.5 5" fill="none" stroke="#3f98d2" stroke-width="1.5"/><rect x="3.45" y="7.6499999999999995" width="2.1" height="2.1" fill="#3f98d2"/><rect x="7.45" y="7.6499999999999995" width="2.1" height="2.1" fill="#3f98d2"/><rect x="11.45" y="7.6499999999999995" width="2.1" height="2.1" fill="#3f98d2"/><rect x="3.45" y="11.75" width="2.1" height="2.1" fill="#3f98d2"/><rect x="7.45" y="11.75" width="2.1" height="2.1" fill="#3f98d2"/></g><g transform="translate(1039.2,276.2)"><rect x="0.7" y="3" width="16" height="13.2" rx="1.4" fill="none" stroke="#3f98d2" stroke-width="1.5"/><path d="M4.5 0.4 L4.5 5 M12.5 0.4 L12.5 5" fill="none" stroke="#3f98d2" stroke-width="1.5"/><rect x="3.45" y="7.6499999999999995" width="2.1" height="2.1" fill="#3f98d2"/><rect x="7.45" y="7.6499999999999995" width="2.1" height="2.1" fill="#3f98d2"/><rect x="11.45" y="7.6499999999999995" width="2.1" height="2.1" fill="#3f98d2"/><rect x="3.45" y="11.75" width="2.1" height="2.1" fill="#3f98d2"/><rect x="7.45" y="11.75" width="2.1" height="2.1" fill="#3f98d2"/></g><g transform="translate(1071,276)"><path d="M6 2.1 L18.2 2.1 L11.6 9.2 L11.6 17 M1 0.6 L7.6 9.6 L7.6 15.8 M1 1.6 L18 16.4" fill="none" stroke="#1a7bbf" stroke-width="1.3" stroke-linejoin="round"/></g><path d="M346.22 822.31 A7.6 7.6 0 1 0 347.29 830.41" fill="none" stroke="#1a7bbf" stroke-width="1.5"/><path d="M346.82 817.71 L346.82 822.71 L341.82 822.71" fill="none" stroke="#1a7bbf" stroke-width="1.5"/><g transform="translate(81,860.2)"><path d="M0.7 11 L0.7 0.7 L13 0.7 L13 8 M13.2 3.8 L16.2 3.8 Q18 3.8 18 5.6 L18 11 L16 11 M14.6 6.6 L17.6 6.6 M5.6 11.2 L10.6 11.2" fill="none" stroke="#3f98d2" stroke-width="1.3" stroke-linejoin="round"/><circle cx="4" cy="11.2" r="1.7" fill="none" stroke="#3f98d2" stroke-width="1.3" stroke-linejoin="round"/><circle cx="12.4" cy="11.2" r="1.7" fill="none" stroke="#3f98d2" stroke-width="1.3" stroke-linejoin="round"/></g></svg>
<svg class="a" style="left:698.2px;top:219.8px;" width="13" height="8" viewBox="0 0 13 8"><polyline points="1,1 6.5,7 12,1" fill="none" stroke="#1b7cc1" stroke-width="1.2"/></svg>
<svg class="a" style="left:736.7px;top:219.8px;" width="13" height="8" viewBox="0 0 13 8"><polyline points="1,1 6.5,7 12,1" fill="none" stroke="#1b7cc1" stroke-width="1.2"/></svg>
<div class="a" style="left:44px;top:303px;width:1588px;height:1px;background:#b4b4b8;"></div>
<div class="a" style="left:44px;top:303px;width:1px;height:505px;background:#b4b4b8;"></div>
<div class="a" style="left:46px;top:306px;width:1152px;height:48px;background:#f9f9f9;"></div>
<div class="a" style="left:46px;top:354px;width:1152px;height:2px;background:#d2d2d2;"></div>
<div class="a" style="left:91px;top:310px;width:1px;height:42px;background:#dadada;"></div>
<div class="a" style="left:193px;top:310px;width:1px;height:42px;background:#dadada;"></div>
<div class="a" style="left:272px;top:310px;width:1px;height:42px;background:#dadada;"></div>
<div class="a" style="left:363px;top:310px;width:1px;height:42px;background:#dadada;"></div>
<div class="a" style="left:448px;top:310px;width:1px;height:42px;background:#dadada;"></div>
<div class="a" style="left:516px;top:310px;width:1px;height:42px;background:#dadada;"></div>
<div class="a" style="left:800px;top:310px;width:1px;height:42px;background:#dadada;"></div>
<div class="a" style="left:897px;top:310px;width:1px;height:42px;background:#dadada;"></div>
<div class="a" style="left:942px;top:310px;width:1px;height:42px;background:#dadada;"></div>
<div class="a" style="left:1039px;top:310px;width:1px;height:42px;background:#dadada;"></div>
<div class="a" style="left:1084px;top:310px;width:1px;height:42px;background:#dadada;"></div>
<div class="a" style="left:800px;top:330px;width:97px;height:1px;background:#dadada;"></div>
<div class="t" style="top:308.98px;font-size:14.5px;left:55.2px;color:#1f1f1f;">Sto.</div>
<div class="t" style="top:308.98px;font-size:14.5px;left:93.9px;color:#1f1f1f;">Lieferant</div>
<div class="t" style="top:308.98px;font-size:14.5px;right:1364px;color:#1f1f1f;">Bestell-Nr.</div>
<div class="t" style="top:308.98px;font-size:14.5px;left:275px;color:#1f1f1f;">Kommission</div>
<div class="t" style="top:308.98px;font-size:14.5px;left:367px;color:#1f1f1f;">Termin</div>
<div class="t" style="top:308.98px;font-size:14.5px;right:1128.5px;color:#1f1f1f;">Abrufe</div>
<div class="t" style="top:308.98px;font-size:14.5px;left:520px;color:#1f1f1f;">Bezeichnung</div>
<div class="t" style="top:308.98px;font-size:14.5px;right:739px;color:#1f1f1f;">Rückstand</div>
<div class="t" style="top:308.98px;font-size:14.5px;left:900.4px;color:#1f1f1f;">ME</div>
<div class="t" style="top:308.98px;font-size:14.5px;right:597px;color:#1f1f1f;">Preis</div>
<div class="t" style="top:308.98px;font-size:14.5px;left:1042.3px;color:#1f1f1f;">Währ.</div>
<div class="t" style="top:308.98px;font-size:14.5px;right:437px;color:#1f1f1f;">Wert</div>
<div class="t" style="top:333.98px;font-size:14.5px;right:739px;color:#1f1f1f;">WE</div>
<div class="t" style="top:358.98px;font-size:14.5px;left:56px;color:#1f1f1f;">000</div>
<div class="t" style="top:358.98px;font-size:14.5px;transform:scaleX(0.9);transform-origin:left center;left:94px;color:#1f1f1f;">EUROPCAR</div>
<div class="t" style="top:358.98px;font-size:14.5px;left:211px;color:#1f1f1f;">728787 1</div>
<div class="t" style="top:358.98px;font-size:14.5px;left:367px;color:#1f1f1f;">31.12.23</div>
<div class="t" style="top:358.98px;font-size:14.5px;left:520px;color:#1f1f1f;">Bestellung Sonstiges</div>
<div class="t" style="top:358.98px;font-size:14.5px;left:682px;color:#1f1f1f;">/</div>
<div class="t" style="top:358.98px;font-size:14.5px;right:738px;color:#1f1f1f;">1,0000</div>
<div class="t" style="top:358.98px;font-size:14.5px;right:596.5px;color:#1f1f1f;">0,00</div>
<div class="t" style="top:358.98px;font-size:14.5px;left:1042px;color:#1f1f1f;">EUR</div>
<div class="t" style="top:358.98px;font-size:14.5px;right:437px;color:#1f1f1f;">0,00</div>
<div class="a" style="left:364px;top:405px;width:85px;height:50px;background:#e6b8b8;"></div>
<div class="a" style="left:46px;top:405px;width:1152px;height:1px;background:#d4d4d4;"></div>
<div class="t" style="top:408.98px;font-size:14.5px;left:56px;color:#1f1f1f;">000</div>
<div class="t" style="top:408.98px;font-size:14.5px;left:94px;color:#1f1f1f;">GM-GMBH</div>
<div class="t" style="top:408.98px;font-size:14.5px;left:211px;color:#1f1f1f;">730413 1</div>
<div class="t" style="top:408.98px;font-size:14.5px;left:367px;color:#1f1f1f;">KW.30.23</div>
<div class="t" style="top:408.98px;font-size:14.5px;left:520px;color:#1f1f1f;">Dichtung Front II V3</div>
<div class="t" style="top:408.98px;font-size:14.5px;left:677px;color:#1f1f1f;">/</div>
<div class="t" style="top:408.98px;font-size:14.5px;right:738px;color:#1f1f1f;">181,0000</div>
<div class="t" style="top:408.98px;font-size:14.5px;left:900.4px;color:#1f1f1f;">STK</div>
<div class="t" style="top:408.98px;font-size:14.5px;right:596.5px;color:#1f1f1f;">2,50</div>
<div class="t" style="top:408.98px;font-size:14.5px;left:1042px;color:#1f1f1f;">EUR</div>
<div class="t" style="top:408.98px;font-size:14.5px;right:437px;color:#1f1f1f;">452,50</div>
<div class="a" style="left:46px;top:455px;width:1152px;height:50px;background:#0078d7;"></div>
<div class="a" style="left:46px;top:455px;width:1152px;height:1px;background:#c8c8c8;"></div>
<div class="t" style="top:458.98px;font-size:14.5px;left:56px;color:#fff;">000</div>
<div class="t" style="top:458.98px;font-size:14.5px;left:94px;color:#fff;">GM-GMBH</div>
<div class="t" style="top:458.98px;font-size:14.5px;left:211px;color:#fff;">730710 1</div>
<div class="t" style="top:458.98px;font-size:14.5px;left:367px;color:#fff;">KW.31.23</div>
<div class="t" style="top:458.98px;font-size:14.5px;left:520px;color:#fff;">O-Ring&nbsp; 20</div>
<div class="t" style="top:458.98px;font-size:14.5px;right:738px;color:#fff;">1,0000</div>
<div class="t" style="top:458.98px;font-size:14.5px;left:900.4px;color:#fff;">STK</div>
<div class="t" style="top:458.98px;font-size:14.5px;right:596.5px;color:#fff;">1,15</div>
<div class="t" style="top:458.98px;font-size:14.5px;left:1042px;color:#fff;">EUR</div>
<div class="t" style="top:458.98px;font-size:14.5px;right:437px;color:#fff;">57,50</div>
<div class="t" style="top:508.98px;font-size:14.5px;left:56px;color:#1f1f1f;">000</div>
<div class="t" style="top:508.98px;font-size:14.5px;transform:scaleX(0.86);transform-origin:left center;left:94px;color:#1f1f1f;">UPS</div>
<div class="t" style="top:508.98px;font-size:14.5px;left:211px;color:#1f1f1f;">728788 1</div>
<div class="t" style="top:508.98px;font-size:14.5px;left:367px;color:#1f1f1f;">31.12.23</div>
<div class="t" style="top:508.98px;font-size:14.5px;left:520px;color:#1f1f1f;">Bestellung Sonstiges</div>
<div class="t" style="top:508.98px;font-size:14.5px;right:738px;color:#1f1f1f;">1,0000</div>
<div class="t" style="top:508.98px;font-size:14.5px;right:596.5px;color:#1f1f1f;">0,00</div>
<div class="t" style="top:508.98px;font-size:14.5px;left:1042px;color:#1f1f1f;">EUR</div>
<div class="t" style="top:508.98px;font-size:14.5px;right:437px;color:#1f1f1f;">0,00</div>
<div class="a" style="left:46px;top:555px;width:1152px;height:1px;background:#d4d4d4;"></div>
<div class="t" style="top:558.98px;font-size:14.5px;left:56px;color:#1f1f1f;">000</div>
<div class="t" style="top:558.98px;font-size:14.5px;transform:scaleX(0.905);transform-origin:left center;left:94px;color:#1f1f1f;">SCHUKAT EL</div>
<div class="t" style="top:558.98px;font-size:14.5px;left:211px;color:#1f1f1f;">730141 1</div>
<div class="t" style="top:558.98px;font-size:14.5px;left:367px;color:#1f1f1f;">KW.50.23</div>
<div class="t" style="top:558.98px;font-size:14.5px;left:520px;color:#1f1f1f;">Kaltgerätestecker</div>
<div class="t" style="top:558.98px;font-size:14.5px;right:738px;color:#1f1f1f;">500,0000</div>
<div class="t" style="top:558.98px;font-size:14.5px;left:900.4px;color:#1f1f1f;">STK</div>
<div class="t" style="top:558.98px;font-size:14.5px;right:596.5px;color:#1f1f1f;">11,74</div>
<div class="t" style="top:558.98px;font-size:14.5px;left:1042px;color:#1f1f1f;">EUR</div>
<div class="t" style="top:558.98px;font-size:14.5px;right:437px;color:#1f1f1f;">5.870,00</div>
<div class="a" style="left:364px;top:605px;width:85px;height:50px;background:#e6b8b8;"></div>
<div class="a" style="left:46px;top:605px;width:1152px;height:1px;background:#d4d4d4;"></div>
<div class="t" style="top:608.98px;font-size:14.5px;left:56px;color:#1f1f1f;">000</div>
<div class="t" style="top:608.98px;font-size:14.5px;transform:scaleX(0.905);transform-origin:left center;left:94px;color:#1f1f1f;">SCHUKAT EL</div>
<div class="t" style="top:608.98px;font-size:14.5px;left:211px;color:#1f1f1f;">730734 1</div>
<div class="t" style="top:608.98px;font-size:14.5px;left:367px;color:#1f1f1f;">KW.40.23</div>
<div class="t" style="top:608.98px;font-size:14.5px;left:520px;color:#1f1f1f;">Wippenschalter</div>
<div class="t" style="top:608.98px;font-size:14.5px;right:738px;color:#1f1f1f;">100,0000</div>
<div class="t" style="top:608.98px;font-size:14.5px;left:900.4px;color:#1f1f1f;">STK</div>
<div class="t" style="top:608.98px;font-size:14.5px;right:596.5px;color:#1f1f1f;">3,99</div>
<div class="t" style="top:608.98px;font-size:14.5px;left:1042px;color:#1f1f1f;">EUR</div>
<div class="t" style="top:608.98px;font-size:14.5px;right:437px;color:#1f1f1f;">399,00</div>
<div class="a" style="left:364px;top:655px;width:85px;height:50px;background:#e6b8b8;"></div>
<div class="a" style="left:46px;top:655px;width:1152px;height:1px;background:#d4d4d4;"></div>
<div class="t" style="top:658.98px;font-size:14.5px;left:56px;color:#1f1f1f;">000</div>
<div class="t" style="top:658.98px;font-size:14.5px;transform:scaleX(0.946);transform-origin:left center;left:94px;color:#1f1f1f;">EMLICH GMB</div>
<div class="t" style="top:658.98px;font-size:14.5px;left:211px;color:#1f1f1f;">730726 1</div>
<div class="t" style="top:658.98px;font-size:14.5px;left:367px;color:#1f1f1f;">KW.30.23</div>
<div class="t" style="top:658.98px;font-size:14.5px;left:520px;color:#1f1f1f;">Bestellung Sonstiges</div>
<div class="t" style="top:658.98px;font-size:14.5px;right:437px;color:#1f1f1f;">0,00</div>
<div class="a" style="left:364px;top:705px;width:85px;height:50px;background:#e6b8b8;"></div>
<div class="a" style="left:46px;top:705px;width:1152px;height:1px;background:#d4d4d4;"></div>
<div class="t" style="top:708.98px;font-size:14.5px;left:56px;color:#1f1f1f;">000</div>
<div class="t" style="top:708.98px;font-size:14.5px;transform:scaleX(0.946);transform-origin:left center;left:94px;color:#1f1f1f;">EMLICH GMB</div>
<div class="t" style="top:708.98px;font-size:14.5px;left:211px;color:#1f1f1f;">730726 2 655890.002</div>
<div class="t" style="top:708.98px;font-size:14.5px;left:367px;color:#1f1f1f;">KW.30.23</div>
<div class="t" style="top:708.98px;font-size:14.5px;left:520px;color:#1f1f1f;">Haltewinkel</div>
<div class="t" style="top:708.98px;font-size:14.5px;right:437px;color:#1f1f1f;">360,00</div>
<div class="a" style="left:364px;top:755px;width:85px;height:50px;background:#e6b8b8;"></div>
<div class="a" style="left:46px;top:755px;width:1152px;height:1px;background:#d4d4d4;"></div>
<div class="t" style="top:758.98px;font-size:14.5px;left:56px;color:#1f1f1f;">000</div>
<div class="t" style="top:758.98px;font-size:14.5px;transform:scaleX(0.922);transform-origin:left center;left:94px;color:#1f1f1f;">WIENEKE CO</div>
<div class="t" style="top:758.98px;font-size:14.5px;left:211px;color:#1f1f1f;">730685 1 652774.004</div>
<div class="t" style="top:758.98px;font-size:14.5px;left:367px;color:#1f1f1f;">31.07.23</div>
<div class="t" style="top:758.98px;font-size:14.5px;left:520px;color:#1f1f1f;">2ter AG Pulver</div>
<div class="t" style="top:758.98px;font-size:14.5px;right:437px;color:#1f1f1f;">720,00</div>
<div class="a" style="left:46px;top:804px;width:1152px;height:2px;background:#d4d4d4;"></div>
<div class="a" style="left:44px;top:808px;width:1588px;height:1px;background:#aaaab0;"></div>
<div class="t" style="top:817.98px;font-size:14.5px;left:47.5px;color:#1f1f1f;">Summe Total</div>
<div class="a" style="left:139px;top:813px;width:182px;height:28px;background:#fff;box-sizing:border-box;border:1px solid #9c9c9c;"></div>
<div class="t" style="top:817.98px;font-size:14.5px;left:354px;color:#1b7cc1;">Summe aktualisieren</div>
<div class="a" style="left:45px;top:848px;width:207px;height:4px;background:#0f73c3;"></div>
<div class="t" style="top:857.97px;font-size:17.4px;left:107px;color:#1f1f1f;">Lieferanten</div>
<svg class="a" style="left:234px;top:861px;" width="13" height="12" viewBox="0 0 13 12"><path d="M1 1 L12 11 M12 1 L1 11" stroke="#333" stroke-width="1.4"/></svg>
<div class="a" style="left:923px;top:888px;width:1px;height:21px;background:#d0d0d0;"></div>
<div class="a" style="left:950px;top:888px;width:1px;height:21px;background:#d0d0d0;"></div>
<div class="a" style="left:1127px;top:888px;width:1px;height:21px;background:#d0d0d0;"></div>
<div class="a" style="left:1179px;top:888px;width:1px;height:21px;background:#d0d0d0;"></div>
<div class="a" style="left:1344px;top:888px;width:1px;height:21px;background:#d0d0d0;"></div>
<div class="a" style="left:1493px;top:888px;width:1px;height:21px;background:#d0d0d0;"></div>
<div class="t" style="top:894.98px;font-size:14.5px;left:959.3px;color:#1f1f1f;">Mi. 06. Dez 2023, KW.49</div>
<div class="t" style="top:894.98px;font-size:14.5px;left:1136px;color:#1f1f1f;">09:02</div>
<div class="t" style="top:894.98px;font-size:14.5px;left:1188px;color:#1f1f1f;">Grüner, Christian (066)</div>
<div class="t" style="top:894.98px;font-size:14.5px;left:1352.6px;color:#1f1f1f;">0 : Global-Abteilung</div>
<div class="t" style="top:894.98px;font-size:14.5px;left:1501.5px;color:#1f1f1f;">000 : Spetec GmbH</div>
<div class="a" style="left:45px;top:890px;width:1px;height:19px;background:#d0d0d0;"></div>
<div class="a" style="left:208px;top:890px;width:1px;height:19px;background:#d0d0d0;"></div>
<svg class="a" style="left:1620px;top:872px;" width="9" height="5" viewBox="0 0 9 5"><polygon points="0,0 9,0 4.5,5" fill="#555"/></svg>
<div class="a" style="left:592px;top:461px;width:279px;height:435px;background:#fff;box-sizing:border-box;border:1px solid #a8a8a8;"></div>
<div class="a" style="left:595px;top:662px;width:274px;height:31px;background:#c5e2ee;"></div>
<div class="a" style="left:631px;top:497px;width:230px;height:1px;background:#dadada;"></div>
<div class="a" style="left:631px;top:564px;width:230px;height:1px;background:#dadada;"></div>
<div class="a" style="left:631px;top:694px;width:230px;height:1px;background:#dadada;"></div>
<div class="a" style="left:631px;top:793px;width:230px;height:1px;background:#dadada;"></div>
<div class="a" style="left:631px;top:828px;width:230px;height:1px;background:#dadada;"></div>
<div class="t" style="top:470.58px;font-size:14.5px;left:636.5px;color:#1f1f1f;"><u>L</u>öschen</div>
<div class="t" style="top:470.58px;font-size:14.5px;right:795.5px;color:#1f1f1f;">F6</div>
<div class="t" style="top:505.78px;font-size:14.5px;left:636.5px;color:#1f1f1f;"><u>P</u>osition splitten</div>
<div class="t" style="top:505.78px;font-size:14.5px;right:795.5px;color:#1f1f1f;">F9</div>
<div class="t" style="top:536.38px;font-size:14.5px;left:636.5px;color:#a6a6a6;"><u>R</u>ückstand abrufen</div>
<div class="t" style="top:536.38px;font-size:14.5px;right:795.5px;color:#a6a6a6;">Strg+F9</div>
<div class="t" style="top:572.98px;font-size:14.5px;left:636.5px;color:#1f1f1f;"><u>B</u>uchen</div>
<div class="t" style="top:572.98px;font-size:14.5px;right:795.5px;color:#1f1f1f;">F8</div>
<div class="t" style="top:604.38px;font-size:14.5px;left:636.5px;color:#1f1f1f;">S<u>c</u>annen</div>
<svg class="a" style="left:856px;top:607.4px;" width="8" height="12" viewBox="0 0 8 12"><polyline points="1.5,1 6.5,6 1.5,11" fill="none" stroke="#1b7cc1" stroke-width="1.3"/></svg>
<div class="t" style="top:636.18px;font-size:14.5px;left:636.5px;color:#1f1f1f;">Dr<u>u</u>cken</div>
<svg class="a" style="left:856px;top:639.2px;" width="8" height="12" viewBox="0 0 8 12"><polyline points="1.5,1 6.5,6 1.5,11" fill="none" stroke="#1b7cc1" stroke-width="1.3"/></svg>
<div class="t" style="top:667.98px;font-size:14.5px;left:636.5px;color:#1f1f1f;">Beleg</div>
<svg class="a" style="left:856px;top:671px;" width="8" height="12" viewBox="0 0 8 12"><polyline points="1.5,1 6.5,6 1.5,11" fill="none" stroke="#1b7cc1" stroke-width="1.3"/></svg>
<div class="t" style="top:702.68px;font-size:14.5px;left:636.5px;color:#1f1f1f;"><u>T</u>ermin-Raster</div>
<div class="t" style="top:702.68px;font-size:14.5px;right:795.5px;color:#1f1f1f;">Strg+T</div>
<div class="t" style="top:734.78px;font-size:14.5px;left:636.5px;color:#1f1f1f;"><u>V</u>erbräuche</div>
<div class="t" style="top:734.78px;font-size:14.5px;right:795.5px;color:#1f1f1f;">Strg+F12</div>
<div class="t" style="top:766.58px;font-size:14.5px;left:636.5px;color:#1f1f1f;"><u>A</u>rtikel-Lieferanten</div>
<div class="t" style="top:766.58px;font-size:14.5px;right:795.5px;color:#1f1f1f;">Strg+Z</div>
<div class="t" style="top:801.48px;font-size:14.5px;left:636.5px;color:#1f1f1f;">In<u>h</u>alt Kopieren</div>
<div class="t" style="top:801.48px;font-size:14.5px;right:795.5px;color:#1f1f1f;">Strg+C</div>
<div class="t" style="top:836.38px;font-size:14.5px;left:636.5px;color:#1f1f1f;">Browser <u>d</u>rucken..</div>
<div class="t" style="top:868.48px;font-size:14.5px;left:636.5px;color:#1f1f1f;">Br<u>o</u>wser exportieren</div>
<svg class="a" style="left:856px;top:871.5px;" width="8" height="12" viewBox="0 0 8 12"><polyline points="1.5,1 6.5,6 1.5,11" fill="none" stroke="#1b7cc1" stroke-width="1.3"/></svg>
<svg class="a" style="left:0;top:0" width="1633" height="909" viewBox="0 0 1633 909"><path d="M602.2 474.6 L618.6 474.6 M608.1000000000001 474.6 L608.1000000000001 471.8 Q608.1000000000001 471.2 608.8000000000001 471.2 L612.0000000000001 471.2 Q612.7 471.2 612.7 471.8 L612.7 474.6" fill="none" stroke="#1a7bbf" stroke-width="1.4" stroke-linecap="round" stroke-linejoin="round"/><path d="M603.8000000000001 474.6 L603.8000000000001 486.79999999999995 Q603.8000000000001 488.4 605.4000000000001 488.4 L615.4 488.4 Q617.0 488.4 617.0 486.79999999999995 L617.0 474.6" fill="none" stroke="#1a7bbf" stroke-width="1.4" stroke-linecap="round" stroke-linejoin="round"/><path d="M608.0000000000001 478.0 L608.0000000000001 485.0 M612.8000000000001 478.0 L612.8000000000001 485.0" fill="none" stroke="#1a7bbf" stroke-width="1.4" stroke-linecap="round" stroke-linejoin="round"/><g transform="translate(601.5,506.2)"><path d="M0.7 11.8 L0.7 0.6 L9.5 0.6 L13.8 5.1" fill="none" stroke="#1a7bbf" stroke-width="1.4"/><path d="M3 2.8 L7 2.8 M3 5.1 L9.5 5.1 M3 7.4 L11 7.4 M3 9.6 L6.5 9.6" fill="none" stroke="#1a7bbf" stroke-width="1.2"/><path d="M1 13.8 L18 7.1" fill="none" stroke="#1a7bbf" stroke-width="2"/><path d="M4.8 14.3 L4.8 17.3 L18 17.3 L18 10.3 M7 12.8 L15.5 12.8 M7 15.1 L15.5 15.1" fill="none" stroke="#1a7bbf" stroke-width="1.3"/></g><g transform="translate(600.5,537.8)"><path d="M1.5 17 L1.5 0.8 L11.8 0.8 L16.4 5.4 L16.4 17 Z M11.8 0.8 L11.8 5.4 L16.4 5.4" fill="none" stroke="#d0d0d0" stroke-width="1.3" stroke-linejoin="round"/><polygon points="7.20,6.60 10.66,8.60 10.66,12.60 7.20,14.60 3.74,12.60 3.74,8.60" fill="none" stroke="#d0d0d0" stroke-width="1.2" stroke-linejoin="round"/><path d="M3.74 8.60 L7.2 10.6 L10.66 8.60 M7.2 10.6 L7.2 14.6" fill="none" stroke="#d0d0d0" stroke-width="1.2"/></g><g transform="translate(601.2,572.8)"><path d="M0.9 4.6 L0.9 1.1 L10.8 1.1 L15.8 6.1 L15.8 11.4 M10.8 1.1 L10.8 6.1 L15.8 6.1 M0.9 14.4 L0.9 17 L8.8 17 M10.9 15 L13 17 L17.2 13" fill="none" stroke="#1a7bbf" stroke-width="1.5" stroke-linejoin="round" stroke-linecap="round"/><polygon points="5.30,5.30 8.68,7.25 8.68,11.15 5.30,13.10 1.92,11.15 1.92,7.25" fill="none" stroke="#1a7bbf" stroke-width="1.4" stroke-linejoin="round"/><path d="M1.92 7.25 L5.3 9.2 L8.68 7.25 M5.3 9.2 L5.3 13.1" fill="none" stroke="#1a7bbf" stroke-width="1.4"/></g><g transform="translate(601,604.4)"><polygon points="5.2,0.2 12.4,2.6 18.4,11.2 16.2,12.4 9.8,5.6 6.6,2.6" fill="#1a7bbf"/><polygon points="0.2,10.4 8.2,6.6 18.2,11.6 9.6,17.2" fill="#1a7bbf"/><path d="M4.2 10.4 L11.6 14.6 M7.4 8.9 L14.6 12.9" stroke="#fff" stroke-width="1.6"/></g><g transform="translate(601.5,636.6)"><rect x="3.7" y="1.6" width="10.5" height="3.4" fill="none" stroke="#1a7bbf" stroke-width="1.5" stroke-linejoin="round"/><path d="M3 12 L1.8 12 Q0.8 12 0.8 11 L0.8 7.2 Q0.8 5 3 5 L15 5 Q17.2 5 17.2 7.2 L17.2 11 Q17.2 12 16.2 12 L15 12" fill="none" stroke="#1a7bbf" stroke-width="1.5" stroke-linejoin="round"/><rect x="3.7" y="9.4" width="10.5" height="7.2" fill="none" stroke="#1a7bbf" stroke-width="1.5" stroke-linejoin="round"/></g><g transform="translate(601.4,667.8)"><rect x="0.7" y="0.8" width="5.9" height="16.6" rx="1" fill="none" stroke="#1a7bbf" stroke-width="1.3" stroke-linejoin="round"/><rect x="6.6" y="2.6" width="4.3" height="14.8" rx="1" fill="none" stroke="#1a7bbf" stroke-width="1.3" stroke-linejoin="round"/><polygon points="11.3,5.8 13.6,5 18,16.4 14.9,17.4" fill="none" stroke="#1a7bbf" stroke-width="1.3" stroke-linejoin="round"/></g><g transform="translate(601.4,703)"><rect x="0.7" y="2.6" width="16.5" height="13.9" rx="1.5" fill="none" stroke="#1a7bbf" stroke-width="1.5" stroke-linejoin="round"/><path d="M5 0.4 L5 4.6 M13 0.4 L13 4.6" fill="none" stroke="#1a7bbf" stroke-width="1.6"/><rect x="4" y="7.6" width="2" height="2" fill="#1a7bbf"/><rect x="8" y="7.6" width="2" height="2" fill="#1a7bbf"/><rect x="12" y="7.6" width="2" height="2" fill="#1a7bbf"/><rect x="4" y="11.6" width="2" height="2" fill="#1a7bbf"/><rect x="8" y="11.6" width="2" height="2" fill="#1a7bbf"/></g><g transform="translate(601.6,735.4)"><path d="M10.6 15.8 L8 17 L0.8 13 L0.8 4.6 L8 0.8 L15.4 4.6 L15.4 7.6 M0.8 4.6 L8 8.6 L15.4 4.6 M8 8.6 L8 17" fill="none" stroke="#1a7bbf" stroke-width="1.4" stroke-linejoin="round" stroke-linecap="round"/><path d="M10.6 11 L16.6 11 M14.2 8.4 L17 11 L14.2 13.6" fill="none" stroke="#1a7bbf" stroke-width="1.4" stroke-linejoin="round" stroke-linecap="round"/></g><g transform="translate(601.4,766.4)"><path d="M0.8 14 L0.8 3.5 M12.6 4 L12.6 11.5 M12.8 6.8 L15.6 6.8 Q17.4 6.8 17.4 8.6 L17.4 14 L15.8 14 M6.3 14 L11.7 14" fill="none" stroke="#1a7bbf" stroke-width="1.4" stroke-linejoin="round"/><polygon points="6.80,1.00 11.48,3.70 11.48,9.10 6.80,11.80 2.12,9.10 2.12,3.70" fill="none" stroke="#1a7bbf" stroke-width="1.4" stroke-linejoin="round"/><path d="M2.12 3.70 L6.8 6.4 L11.48 3.70 M6.8 6.4 L6.8 11.8" fill="none" stroke="#1a7bbf" stroke-width="1.4"/><circle cx="4.4" cy="14.2" r="1.9" fill="none" stroke="#1a7bbf" stroke-width="1.4" stroke-linejoin="round"/><circle cx="13.8" cy="14.2" r="1.9" fill="none" stroke="#1a7bbf" stroke-width="1.4" stroke-linejoin="round"/></g><g transform="translate(601.4,801.4)"><path d="M1 7.6 L6.8 1.6 L12.6 3.4 L17.4 9.6 L15.4 16.2 L8.6 17.2 Z" fill="none" stroke="#cfcfcf" stroke-width="1.2" stroke-linejoin="round"/><path d="M14.8 10.4 Q16.8 12.4 15 14.6" fill="none" stroke="#cfcfcf" stroke-width="1"/></g><g transform="translate(601.5,836.8)"><rect x="3.7" y="1.6" width="10.5" height="3.4" fill="none" stroke="#1a7bbf" stroke-width="1.5" stroke-linejoin="round"/><path d="M3 12 L1.8 12 Q0.8 12 0.8 11 L0.8 7.2 Q0.8 5 3 5 L15 5 Q17.2 5 17.2 7.2 L17.2 11 Q17.2 12 16.2 12 L15 12" fill="none" stroke="#1a7bbf" stroke-width="1.5" stroke-linejoin="round"/><rect x="3.7" y="9.4" width="10.5" height="7.2" fill="none" stroke="#1a7bbf" stroke-width="1.5" stroke-linejoin="round"/></g><g transform="translate(601.4,869.2)"><path d="M0.9 1.8 Q0.9 0.9 1.8 0.9 L13.8 0.9 L17.4 4.5 L17.4 16.6 Q17.4 17.5 16.5 17.5 L1.8 17.5 Q0.9 17.5 0.9 16.6 Z" fill="none" stroke="#1a7bbf" stroke-width="1.6" stroke-linejoin="round"/><path d="M4.2 0.9 L4.2 5.8 L12.6 5.8 L12.6 0.9 M3.8 17.5 L3.8 10.6 L14.4 10.6 L14.4 17.5" fill="none" stroke="#1a7bbf" stroke-width="1.6" stroke-linejoin="round"/></g></svg>
<div class="a" style="left:869px;top:659px;width:219px;height:163px;background:#fff;box-sizing:border-box;border:1px solid #a8a8a8;"></div>
<svg class="a" style="left:875px;top:718px" width="207" height="42" viewBox="0 0 207 42"><path d="M2 6 Q60 1 204 2 L205 38 Q120 41 2 40 Z" fill="#ffe600"/></svg>
<div class="t" style="top:667.68px;font-size:14.5px;left:913.5px;color:#1f1f1f;font-weight:bold;"><u>B</u>estellung</div>
<div class="t" style="top:667.68px;font-size:14.5px;right:579px;color:#1f1f1f;font-weight:bold;">F3</div>
<div class="t" style="top:699.38px;font-size:14.5px;left:913.5px;color:#1f1f1f;"><u>A</u>uftragsbestätigung</div>
<div class="t" style="top:730.98px;font-size:14.5px;left:913.5px;color:#2a2a00;">B<u>e</u>stelländerung</div>
<div class="t" style="top:762.68px;font-size:14.5px;left:913.5px;color:#1f1f1f;">Be<u>s</u>tellmahnung</div>
<div class="t" style="top:794.38px;font-size:14.5px;left:913.5px;color:#1f1f1f;">Bes<u>t</u>ell-Storno</div>
<svg class="a" style="left:0;top:0" width="1633" height="909" viewBox="0 0 1633 909"><g transform="translate(878.6,731.6)"><rect x="0.7" y="0.8" width="5.9" height="16.6" rx="1" fill="none" stroke="#4d9a10" stroke-width="1.4" stroke-linejoin="round"/><rect x="6.6" y="2.6" width="4.3" height="14.8" rx="1" fill="none" stroke="#4d9a10" stroke-width="1.4" stroke-linejoin="round"/><polygon points="11.3,5.8 13.6,5 18,16.4 14.9,17.4" fill="none" stroke="#4d9a10" stroke-width="1.4" stroke-linejoin="round"/></g><path d="M932.4 896.6 L928.8 900.2 Q929.4 905.4 935.4 910 M932.4 896.6 L935.4 900.4 L933.4 902.6 Q934.8 906 939 908.2 L941.6 906.4 L945.6 909.6" fill="none" stroke="#3f98d2" stroke-width="1.3" stroke-linejoin="round"/><rect x="8.3" y="812" width="12.4" height="9.7" rx="1.6" fill="none" stroke="#1a84cc" stroke-width="1.6"/><path d="M12.6 811.2 L12.6 809.6 Q12.6 808.2 14 808.2 L24 808.2 Q25.4 808.2 25.4 809.6 L25.4 815.6 Q25.4 817 24 817 L21.8 817" fill="none" stroke="#1a84cc" stroke-width="1.6"/><rect x="8.6" y="834.6" width="6.8" height="6.8" rx="1" fill="none" stroke="#1a84cc" stroke-width="1.6"/><rect x="18.2" y="834.6" width="6.8" height="6.8" rx="1" fill="none" stroke="#1a84cc" stroke-width="1.6"/><rect x="8.6" y="844.6" width="6.8" height="6.8" rx="1" fill="none" stroke="#1a84cc" stroke-width="1.6"/><rect x="18.2" y="844.6" width="6.8" height="6.8" rx="1" fill="none" stroke="#1a84cc" stroke-width="1.6"/><polygon points="23.20,871.50 25.14,872.51 24.55,874.79 22.36,874.72 21.27,876.17 21.92,878.25 19.89,879.45 18.39,877.85 16.60,878.10 15.59,880.04 13.31,879.45 13.38,877.26 11.93,876.17 9.85,876.82 8.65,874.79 10.25,873.29 10.00,871.50 8.06,870.49 8.65,868.21 10.84,868.28 11.93,866.83 11.28,864.75 13.31,863.55 14.81,865.15 16.60,864.90 17.61,862.96 19.89,863.55 19.82,865.74 21.27,866.83 23.35,866.18 24.55,868.21 22.95,869.71" fill="none" stroke="#1a84cc" stroke-width="1.4" stroke-linejoin="round"/><circle cx="16.6" cy="871.5" r="3.0" fill="none" stroke="#1a84cc" stroke-width="1.4"/><rect x="10.8" y="893.8" width="25.4" height="20" rx="1.6" fill="none" stroke="#fff" stroke-width="1.5"/><rect x="11.5" y="895.6" width="24" height="3" fill="#fff"/><rect x="13.100000000000001" y="896.4" width="1.4" height="1.4" fill="#0a72bf"/><rect x="15.7" y="896.4" width="1.4" height="1.4" fill="#0a72bf"/><rect x="18.3" y="896.4" width="1.4" height="1.4" fill="#0a72bf"/><path d="M20.6 898.6 L20.6 909 M12 902.4 L19 902.4 M12 905.8 L19 905.8" stroke="#fff" stroke-width="1.5"/><circle cx="66.3" cy="902.6" r="10" fill="none" stroke="#1a7bbf" stroke-width="1.6"/><path d="M60.6 897.6 L60.6 905 Q60.8 908.6 64 908.6 Q66.8 908.4 66.8 905.4 Q66.6 902.4 64 902.4 Q62.2 902.4 61.6 903.6 M66.8 905 L72 904.4 Q71.6 901.6 69.2 901.6 Q66.8 901.8 66.8 905 Q67 908.2 69.6 908.4 Q71.4 908.4 72.6 907" fill="none" stroke="#1a7bbf" stroke-width="1.3"/><circle cx="104" cy="897.6" r="4.6" fill="none" stroke="#1a7bbf" stroke-width="1.6"/><path d="M93.6 912 Q94.4 906 103 905.6" fill="none" stroke="#1a7bbf" stroke-width="1.6"/><path d="M107.6 912 Q109 906.4 113 906.4 Q117.4 906.6 118.2 912" fill="none" stroke="#1a7bbf" stroke-width="1.6"/><rect x="134.2" y="893.4" width="9.6" height="9.6" rx="1.2" fill="none" stroke="#1a7bbf" stroke-width="1.7"/><rect x="148.4" y="893.4" width="9.6" height="9.6" rx="1.2" fill="none" stroke="#1a7bbf" stroke-width="1.7"/><rect x="134.2" y="907.6" width="9.6" height="9.6" rx="1.2" fill="none" stroke="#1a7bbf" stroke-width="1.7"/><rect x="148.4" y="907.6" width="9.6" height="9.6" rx="1.2" fill="none" stroke="#1a7bbf" stroke-width="1.7"/><rect x="172.2" y="893.4" width="24.6" height="20" rx="1.2" fill="none" stroke="#1a7bbf" stroke-width="1.5"/><path d="M172.4 898.2 L196.8 898.2" stroke="#1a7bbf" stroke-width="1.4"/><rect x="174.70000000000002" y="895.2" width="1.4" height="1.4" fill="#1a7bbf"/><rect x="177.3" y="895.2" width="1.4" height="1.4" fill="#1a7bbf"/><rect x="179.9" y="895.2" width="1.4" height="1.4" fill="#1a7bbf"/><path d="M175.6 902 L175.6 909 M177.6 907 Q180 904.4 182.4 906.6 M183 906.4 L188 906" fill="none" stroke="#1a7bbf" stroke-width="1.3"/></svg>
</body></html>
